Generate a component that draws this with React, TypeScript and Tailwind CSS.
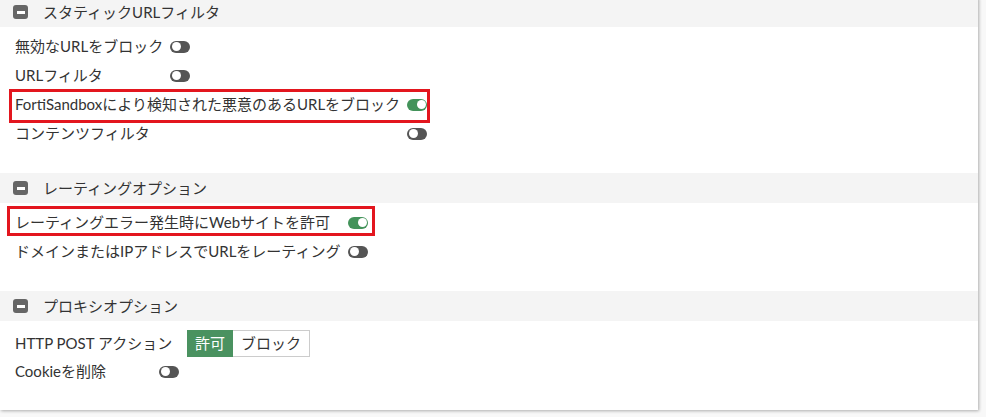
import React from "react";

const font = { fontFamily: "Lato, 'Noto Sans CJK JP', sans-serif" };

const Toggle = ({ on = false }: { on?: boolean }) => (
  <span
    className={`relative inline-block w-[20px] h-[12px] rounded-full shrink-0 ${
      on ? "bg-[#43935a]" : "bg-[#555555]"
    }`}
  >
    <span
      className={`absolute top-[1.5px] w-[9px] h-[9px] rounded-full bg-white ${
        on ? "right-[1.5px]" : "left-[1.5px]"
      }`}
    />
  </span>
);

const SectionHeader = ({ title }: { title: string }) => (
  <div className="h-[30px] bg-[#f4f4f4] flex items-center pl-[13px]">
    <span className="w-[15px] h-[14px] rounded-[3px] bg-[#666666] flex items-center justify-center">
      <span className="w-[8px] h-[3px] bg-white" />
    </span>
    <span className="ml-[15px] text-[15px] text-[#333333]">{title}</span>
  </div>
);

const Row = ({
  label,
  labelWidth,
  children,
}: {
  label: string;
  labelWidth: string;
  children: React.ReactNode;
}) => (
  <div className="h-[29px] flex items-center pl-[15px] text-[15px] text-[#333333]">
    <span className={`${labelWidth} shrink-0 whitespace-nowrap`}>{label}</span>
    {children}
  </div>
);

export default function App() {
  return (
    <div className="w-[986px] h-[417px] bg-[#f8f8f8] overflow-hidden" style={font}>
      <div className="relative w-[978px] -mt-[3px] bg-white shadow-[1px_1px_3px_rgba(0,0,0,0.3)]">
        <SectionHeader title="スタティックURLフィルタ" />
        <div className="pt-[5px] pb-[25px]">
          <Row label="無効なURLをブロック" labelWidth="w-[155px]">
            <Toggle />
          </Row>
          <Row label="URLフィルタ" labelWidth="w-[155px]">
            <Toggle />
          </Row>
          <Row label="FortiSandboxにより検知された悪意のあるURLをブロック" labelWidth="w-[392px]">
            <Toggle on />
          </Row>
          <Row label="コンテンツフィルタ" labelWidth="w-[392px]">
            <Toggle />
          </Row>
        </div>

        <SectionHeader title="レーティングオプション" />
        <div className="pt-[5px] pb-[25px]">
          <Row label="レーティングエラー発生時にWebサイトを許可" labelWidth="w-[333px]">
            <Toggle on />
          </Row>
          <Row label="ドメインまたはIPアドレスでURLをレーティング" labelWidth="w-[333px]">
            <Toggle />
          </Row>
        </div>

        <SectionHeader title="プロキシオプション" />
        <div className="pt-[8px] pb-[24px]">
          <div className="h-[28px] flex items-center pl-[15px] text-[15px] text-[#333333]">
            <span className="w-[172px] shrink-0 whitespace-nowrap">HTTP POST アクション</span>
            <div className="flex h-[27px]">
              <span className="w-[46px] flex items-center justify-center bg-[#4a9260] text-white border border-[#4a9260]">
                許可
              </span>
              <span className="w-[77px] flex items-center justify-center bg-white border border-l-0 border-[#cccccc]">
                ブロック
              </span>
            </div>
          </div>
          <Row label="Cookieを削除" labelWidth="w-[144px]">
            <Toggle />
          </Row>
        </div>

        {/* annotation boxes */}
        <div className="absolute left-[9px] top-[92px] w-[421px] h-[34px] border-[3px] border-[#e3161e]" />
        <div className="absolute left-[7px] top-[209px] w-[368px] h-[30px] border-[3px] border-[#e3161e]" />
      </div>
    </div>
  );
}
